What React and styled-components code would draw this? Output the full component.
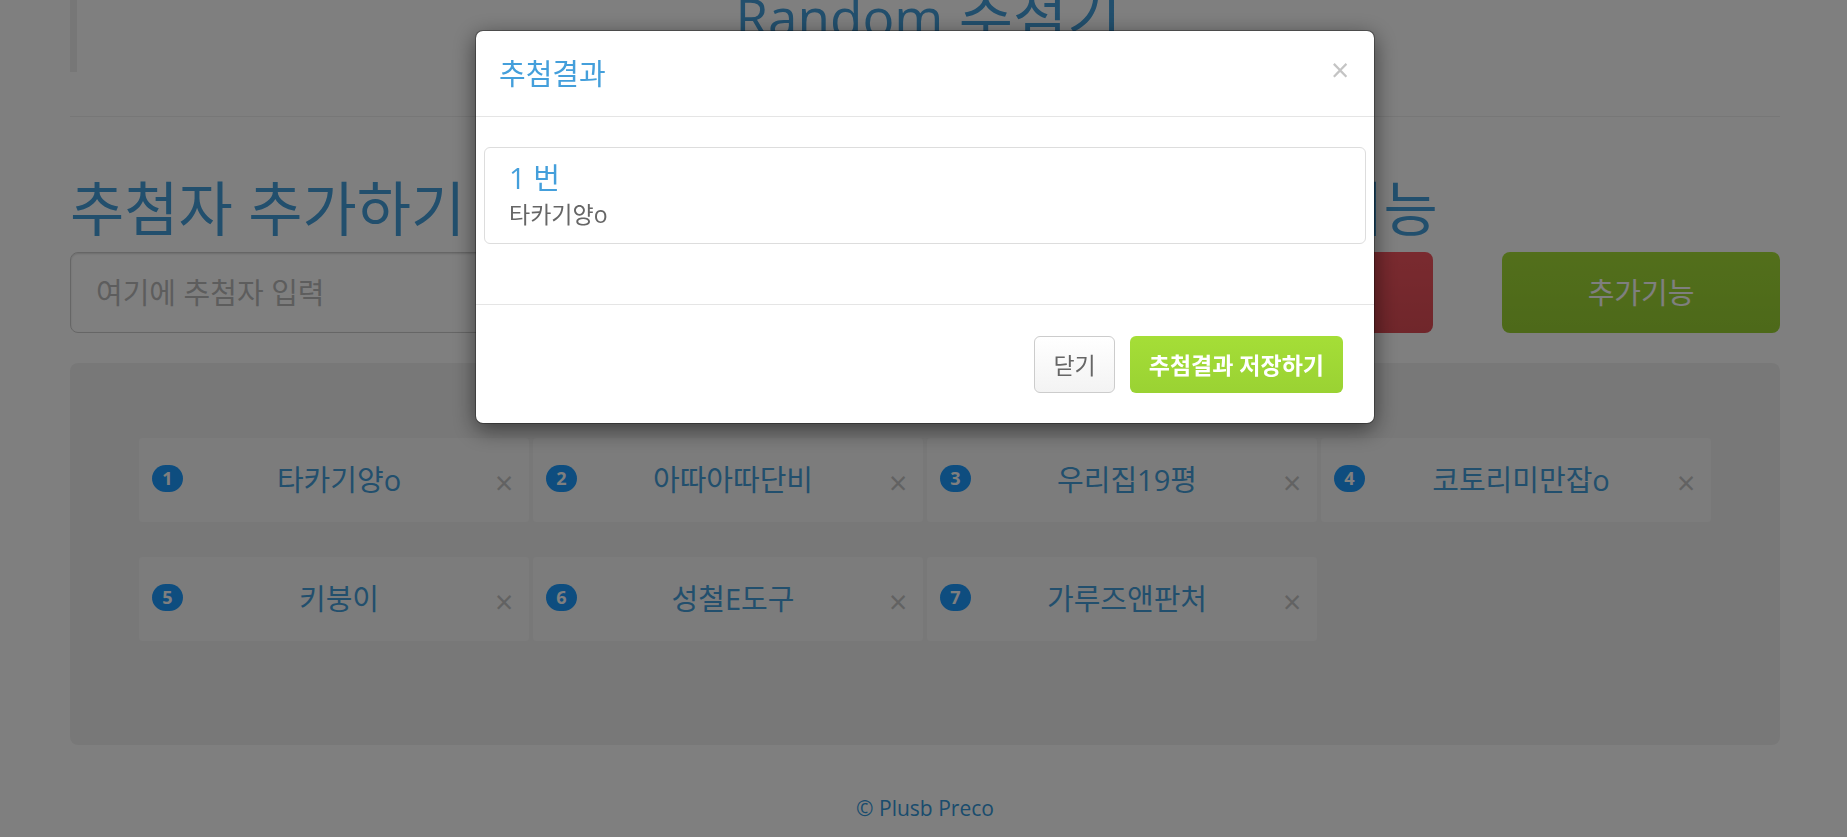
import React from "react";
import styled, { createGlobalStyle } from "styled-components";

const candidates = [
  { id: 1, name: "타카기양o" },
  { id: 2, name: "아따아따단비" },
  { id: 3, name: "우리집19평" },
  { id: 4, name: "코토리미만잡o" },
  { id: 5, name: "키붕이" },
  { id: 6, name: "성철E도구" },
  { id: 7, name: "가루즈앤판처" },
];

const winners = [{ order: 1, name: "타카기양o" }];

export default function App() {
  return (
    <>
      <GlobalStyle />
      <Page>
        <PageHeader>
          <h1>
            <Latin>Random</Latin> 추첨기
          </h1>
        </PageHeader>
        <Divider />
        <Controls>
          <div>
            <SectionTitle as="label" htmlFor="candidate">
              추첨자 추가하기
            </SectionTitle>
            <NameInput id="candidate" type="text" placeholder="여기에 추첨자 입력" />
          </div>
          <div>
            <SectionTitle>추첨기 기능</SectionTitle>
            <BigButton $color="red">추첨하기</BigButton>
          </div>
          <BigButton $color="green">추가기능</BigButton>
        </Controls>
        <CandidateList>
          {candidates.map((item) => (
            <Candidate key={item.id}>
              <Badge>{item.id}</Badge>
              <CandidateName>{item.name}</CandidateName>
              <CloseBtn aria-label={`${item.name} 삭제`}>×</CloseBtn>
            </Candidate>
          ))}
        </CandidateList>
        <Footer>
          <a href="#top">© Plusb Preco</a>
        </Footer>
      </Page>
      <Backdrop>
        <Modal role="dialog" aria-modal="true" aria-labelledby="result-title">
          <ModalHeader>
            <h4 id="result-title">추첨결과</h4>
            <CloseBtn aria-label="닫기">×</CloseBtn>
          </ModalHeader>
          <ModalBody>
            {winners.map((item) => (
              <Winner key={item.order}>
                <h4>{item.order} 번</h4>
                <p>{item.name}</p>
              </Winner>
            ))}
          </ModalBody>
          <ModalFooter>
            <ModalButton>닫기</ModalButton>
            <ModalButton $primary>추첨결과 저장하기</ModalButton>
          </ModalFooter>
        </Modal>
      </Backdrop>
    </>
  );
}

const GlobalStyle = createGlobalStyle`
  * {
    box-sizing: border-box;
  }

  body {
    margin: 0;
    background: #fff;
    color: #666;
    font-family: "Open Sans", "Noto Sans CJK KR", sans-serif;
    font-size: 23px;
    line-height: 32px;
  }

  h1,
  h2,
  h4,
  p {
    margin: 0;
    font-weight: 400;
  }

  button,
  input {
    font-family: inherit;
  }
`;

const Page = styled.main`
  margin-top: -43px;
  padding: 0 67px 0 70px;
`;

const PageHeader = styled.header`
  padding: 24px 0;
  border-left: 7px solid #eee;
  text-align: center;

  h1 {
    font-size: 59px;
    line-height: 67px;
    color: #449fdb;
  }
`;

const Latin = styled.span`
  font-size: 53px;
  line-height: 53px;
`;

const Divider = styled.hr`
  margin: 44px 0 48px;
  border: none;
  border-top: 1px solid #eee;
`;

const Controls = styled.section`
  display: grid;
  grid-template-columns: minmax(0, 1fr) 282px 278px;
  column-gap: 69px;
  align-items: end;
  margin-bottom: 30px;
`;

const SectionTitle = styled.h2`
  display: block;
  font-size: 59px;
  line-height: 87px;
  color: #449fdb;
  white-space: nowrap;
`;

const NameInput = styled.input`
  display: block;
  width: 100%;
  height: 81px;
  padding: 0 25px;
  border: 1px solid #ccc;
  border-radius: 8px;
  background: #fff;
  box-shadow: inset 0 1px 2px rgba(0, 0, 0, 0.15);
  font-size: 29px;

  &::placeholder {
    color: #bbb;
    opacity: 1;
  }
`;

const BigButton = styled.button`
  display: block;
  width: 100%;
  height: 81px;
  padding: 0 0 4px;
  border: none;
  border-radius: 8px;
  background: ${({ $color }) =>
    $color === "red"
      ? "linear-gradient(#f4555f, #e04d56)"
      : "linear-gradient(#a5de37, #9ad233)"};
  font-size: 29px;
  color: #fff;
`;

const CandidateList = styled.ul`
  display: grid;
  grid-template-columns: repeat(4, 1fr);
  gap: 33px 2px;
  margin: 0;
  padding: 74px 68px 103px;
  border-radius: 8px;
  background: #f1f1f1;
  list-style: none;
`;

const Badge = styled.span`
  width: 31px;
  border-radius: 14px;
  background: #1c9bff;
  font-size: 18px;
  font-weight: 700;
  line-height: 27px;
  text-align: center;
  color: #fff;
`;

const CandidateName = styled.span`
  flex: 1;
  font-size: 29px;
  line-height: 40px;
  text-align: center;
  color: #449fdb;
`;

const CloseBtn = styled.button`
  width: 18px;
  padding: 0;
  border: none;
  background: none;
  font-size: 32px;
  line-height: 32px;
  color: #c4c4c4;
`;

const Candidate = styled.li`
  display: flex;
  align-items: center;
  height: 86px;
  padding: 0 16px 0 13px;
  border: 1px solid #f0f0f0;
  border-radius: 4px;
  background: #f9f9f9;

  ${Badge} {
    margin-bottom: 4px;
  }

  ${CloseBtn} {
    margin-top: 6px;
  }
`;

const Footer = styled.footer`
  padding: 46px 0 12px;
  text-align: center;

  a {
    font-size: 21px;
    color: #3498db;
    text-decoration: none;
  }
`;

const Backdrop = styled.div`
  position: fixed;
  inset: 0;
  padding-top: 30px;
  padding-left: 3px;
  background: rgba(0, 0, 0, 0.5);
`;

const Modal = styled.div`
  width: 900px;
  max-width: 100%;
  margin: 0 auto;
  border: 1px solid rgba(0, 0, 0, 0.3);
  border-radius: 8px;
  background: #fff;
  background-clip: padding-box;
  box-shadow: 0 6px 22px rgba(0, 0, 0, 0.5);
`;

const ModalHeader = styled.div`
  display: flex;
  justify-content: space-between;
  align-items: flex-start;
  padding: 23px 25px 22px 23px;
  border-bottom: 1px solid #e5e5e5;

  h4 {
    font-size: 29px;
    line-height: 40px;
    color: #449fdb;
  }
`;

const ModalBody = styled.div`
  padding: 30px 8px 60px;
`;

const Winner = styled.div`
  padding: 10px 24px 13px;
  border: 1px solid #ddd;
  border-radius: 6px;

  h4 {
    font-size: 29px;
    line-height: 40px;
    color: #449fdb;
  }
`;

const ModalFooter = styled.div`
  display: flex;
  justify-content: flex-end;
  gap: 15px;
  padding: 31px 31px 30px;
  border-top: 1px solid #e5e5e5;
`;

const ModalButton = styled.button`
  height: 57px;
  padding: 0 18px 2px;
  border: 1px solid ${({ $primary }) => ($primary ? "transparent" : "#ccc")};
  border-radius: 6px;
  background: ${({ $primary }) =>
    $primary
      ? "linear-gradient(#a5de37, #9ad233) border-box"
      : "linear-gradient(#fff, #f3f3f3)"};
  font-size: 23px;
  font-weight: ${({ $primary }) => ($primary ? 600 : 400)};
  color: ${({ $primary }) => ($primary ? "#fff" : "#666")};
`;
